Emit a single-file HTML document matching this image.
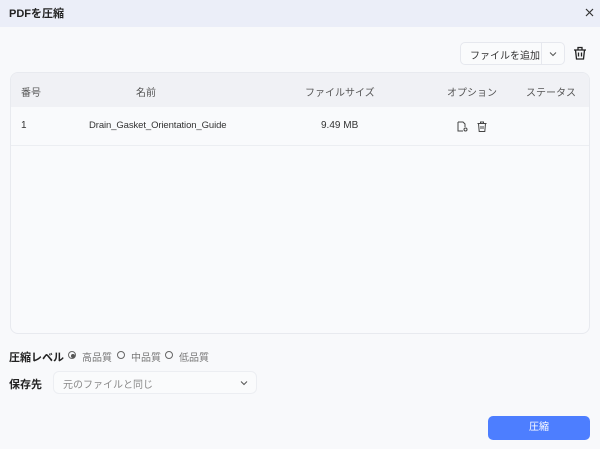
<!DOCTYPE html>
<html><head><meta charset="utf-8"><style>
*{margin:0;padding:0;box-sizing:border-box}
body{width:600px;height:449px;overflow:hidden;background:#f8f9fb;font-family:"Liberation Sans","Noto Sans CJK JP",sans-serif;position:relative;color:#333}
.hdr{position:absolute;left:0;top:0;width:600px;height:27px;background:#ebeef8}
.hdr .t{position:absolute;left:9px;top:5px;font-size:11px;font-weight:bold;color:#222}
.add{position:absolute;left:460px;top:42px;width:105px;height:23px;border:1px solid #e6e8ee;border-radius:5px;background:#fafbfc;font-size:10px;color:#333}
.add span{position:absolute;left:9px;top:4px}
.add .sep{position:absolute;left:80px;top:0;width:1px;height:21px;background:#e6e8ee}
.tbl{position:absolute;left:10px;top:72px;width:580px;height:262px;border:1px solid #e8eaef;border-radius:8px;background:#f9fafc;overflow:hidden}
.th{height:34px;background:#f0f1f5;font-size:10px;color:#555;position:relative}
.row{height:39px;border-bottom:1px solid #eceef2;font-size:10px;color:#333;position:relative}
.a{position:absolute;top:11px}
.row .a{top:13px}
.r{position:absolute;top:349px;font-size:10px;color:#777}
.circ{display:inline-block;width:8px;height:8px;border:1px solid #666;border-radius:50%;position:absolute;top:351px}
.sel{position:absolute;left:53px;top:371px;width:204px;height:23px;border:1px solid #eceef2;border-radius:6px;background:#fafbfc;font-size:10px;color:#888}
.btn{position:absolute;left:488px;top:416px;width:102px;height:24px;background:#4d7eff;border-radius:5px;color:#fff;font-size:10px;text-align:center;line-height:24px}
</style></head><body>
<div class="hdr"><div class="t">PDFを圧縮</div>
<svg style="position:absolute;left:585px;top:8px" width="9" height="9" viewBox="0 0 9 9"><path d="M1 1L8 8M8 1L1 8" stroke="#333" stroke-width="1.2"/></svg></div>
<div class="add"><span>ファイルを追加</span><div class="sep"></div>
<svg style="position:absolute;left:88px;top:8px" width="8" height="6" viewBox="0 0 8 6"><path d="M1 1.5L4 4.5L7 1.5" stroke="#555" fill="none" stroke-width="1"/></svg></div>
<svg style="position:absolute;left:573px;top:46px" width="14" height="14" viewBox="0 0 14 14" fill="none" stroke="#222" stroke-width="1.3"><path d="M1 4h12M5 4V1.5h4V4M2.5 4l1 9h7l1-9M5.5 6.5v4M8.5 6.5v4"/></svg>
<div class="tbl">
<div class="th"><span class="a" style="left:10px">番号</span><span class="a" style="left:125px">名前</span><span class="a" style="left:294px">ファイルサイズ</span><span class="a" style="left:436px">オプション</span><span class="a" style="left:515px">ステータス</span></div>
<div class="row"><span class="a" style="left:10px">1</span><span class="a" style="left:78px;font-size:9.5px;letter-spacing:-0.1px">Drain_Gasket_Orientation_Guide</span><span class="a" style="left:310px">9.49 MB</span>
<svg style="position:absolute;left:446px;top:14px" width="11" height="11" viewBox="0 0 11 11" fill="none" stroke="#444" stroke-width="1"><path d="M1 1h5l2 2v3M1 1v9h5"/><circle cx="8.5" cy="8.5" r="1.5"/></svg>
<svg style="position:absolute;left:466px;top:14px" width="10" height="11" viewBox="0 0 10 11" fill="none" stroke="#444" stroke-width="1"><path d="M0.5 2.5h9M3.5 2.5V1h3v1.5M1.5 2.5l.7 8h5.6l.7-8M4 5v3M6 5v3"/></svg></div>
</div>
<div style="position:absolute;left:9px;top:349px;font-size:11px;font-weight:bold;color:#222">圧縮レベル</div>
<span class="circ" style="left:68px"></span><span style="position:absolute;left:71px;top:354px;width:4px;height:4px;border-radius:50%;background:#555"></span>
<span class="r" style="left:82px">高品質</span>
<span class="circ" style="left:117px"></span><span class="r" style="left:131px">中品質</span>
<span class="circ" style="left:165px"></span><span class="r" style="left:179px">低品質</span>
<div style="position:absolute;left:9px;top:376px;font-size:11px;font-weight:bold;color:#222">保存先</div>
<div class="sel"><span style="position:absolute;left:9px;top:4px">元のファイルと同じ</span>
<svg style="position:absolute;left:186px;top:8px" width="8" height="6" viewBox="0 0 8 6"><path d="M1 1.5L4 4.5L7 1.5" stroke="#555" fill="none" stroke-width="1"/></svg></div>
<div class="btn">圧縮</div>
</body></html>
